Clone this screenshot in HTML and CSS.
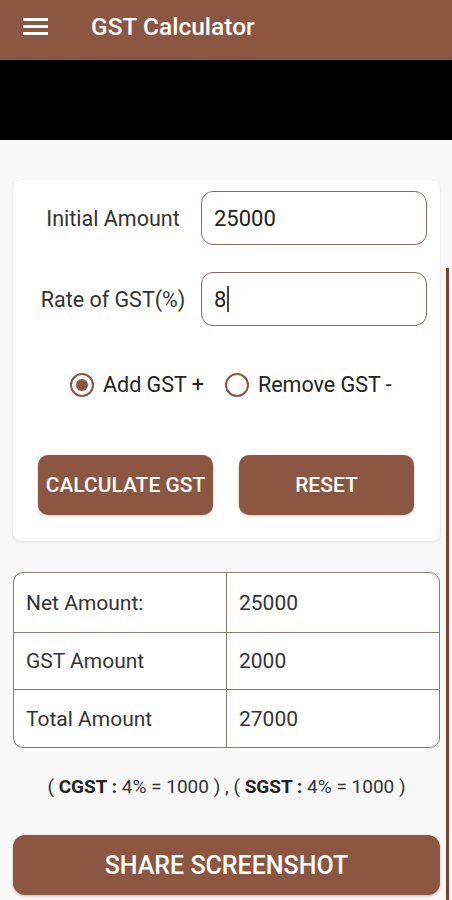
FILE: index.html
```html
<!DOCTYPE html>
<html lang="en">
<head>
    <meta charset="UTF-8">
    <meta name="viewport" content="width=device-width, initial-scale=1.0">
    <title>GST Calculator</title>
    <link rel="stylesheet" href="styles.css">
</head>
<body>
    <header class="app-bar">
        <svg class="menu-icon" width="26" height="18" viewBox="0 0 26 18">
            <rect x="0" y="1" width="25" height="3" fill="#fff"/>
            <rect x="0" y="8" width="25" height="3" fill="#fff"/>
            <rect x="0" y="15" width="25" height="3" fill="#fff"/>
        </svg>
        <h1 class="app-title">GST Calculator</h1>
    </header>
    <div class="ad-band"></div>

    <main class="content">
        <div class="scroll-bar"></div>

        <section class="card">
            <div class="field-row">
                <label class="field-label">Initial Amount</label>
                <div class="field-box">25000</div>
            </div>
            <div class="field-row">
                <label class="field-label">Rate of GST(%)</label>
                <div class="field-box">8<span class="caret"></span></div>
            </div>

            <div class="radio-row">
                <label class="radio">
                    <span class="radio-dot checked"></span>
                    <span>Add GST +</span>
                </label>
                <label class="radio">
                    <span class="radio-dot"></span>
                    <span>Remove GST -</span>
                </label>
            </div>

            <div class="button-row">
                <button class="btn">CALCULATE GST</button>
                <button class="btn">RESET</button>
            </div>
        </section>

        <table class="result-table">
            <tr>
                <td>Net Amount:</td>
                <td>25000</td>
            </tr>
            <tr>
                <td>GST Amount</td>
                <td>2000</td>
            </tr>
            <tr>
                <td>Total Amount</td>
                <td>27000</td>
            </tr>
        </table>

        <p class="split">( <b>CGST :</b> 4% = 1000 ) , ( <b>SGST :</b> 4% = 1000 )</p>

        <button class="share-btn">SHARE SCREENSHOT</button>
    </main>
</body>
</html>
```

FILE: styles.css
```css
body {
    margin: 0;
    font-family: Roboto, 'Noto Sans', sans-serif;
    background: #f8f8f8;
    width: 452px;
    height: 900px;
    overflow: hidden;
}

.app-bar {
    height: 60px;
    background: #8b5742;
    display: flex;
    align-items: center;
    padding-left: 23px;
}

.menu-icon {
    display: block;
    margin-top: -8px;
}

.app-title {
    margin: -8px 0 0 42px;
    color: #fff;
    font-size: 24.5px;
    font-weight: 500;
}

.ad-band {
    height: 80px;
    background: #000;
}

.content {
    position: relative;
    padding: 40px 12px 0 13px;
    height: 760px;
    box-sizing: border-box;
}

.scroll-bar {
    position: absolute;
    right: 3px;
    top: 128px;
    width: 3px;
    bottom: 0;
    background: #7a4330;
}

.card {
    background: #fff;
    border-radius: 8px;
    box-shadow: 0 1px 3px rgba(0,0,0,0.12);
    padding: 11px 13px 26px 0;
}

.field-row {
    display: flex;
    align-items: center;
    margin-bottom: 27px;
}

.field-label {
    width: 188px;
    padding-left: 12px;
    box-sizing: border-box;
    text-align: center;
    font-size: 21.5px;
    color: #333;
    white-space: nowrap;
}

.field-box {
    flex: 1;
    height: 52px;
    border: 1px solid #8b6a5c;
    border-radius: 12px;
    display: flex;
    align-items: center;
    padding-left: 12px;
    font-size: 22px;
    color: #222;
}

.caret {
    display: inline-block;
    width: 2px;
    height: 26px;
    background: #5a3a2c;
    margin-left: 1px;
}

.radio-row {
    display: flex;
    gap: 21px;
    margin-top: 46px;
    padding-left: 57px;
}

.radio {
    display: flex;
    align-items: center;
    gap: 9px;
    font-size: 21.5px;
    color: #222;
}

.radio-dot {
    width: 24px;
    height: 24px;
    border: 2px solid #8b5742;
    border-radius: 50%;
    box-sizing: border-box;
    position: relative;
}

.radio-dot.checked::after {
    content: "";
    position: absolute;
    left: 4px;
    top: 4px;
    width: 12px;
    height: 12px;
    border-radius: 50%;
    background: #8b5742;
}

.button-row {
    display: flex;
    gap: 26px;
    padding-left: 25px;
    margin-top: 58px;
}

.btn {
    width: 175px;
    height: 60px;
    background: #8b5742;
    color: #fff;
    border: none;
    border-radius: 10px;
    font-family: Roboto, sans-serif;
    font-size: 21px;
    font-weight: 500;
    padding: 0;
    white-space: nowrap;
    box-shadow: 0 1px 3px rgba(0,0,0,0.2);
}

.result-table {
    width: 427px;
    margin-top: 31px;
    border-collapse: separate;
    border-spacing: 0;
    border: 1px solid #8d7b72;
    border-radius: 10px;
    background: #fff;
    font-size: 21px;
    color: #333;
}

.result-table td {
    height: 56px;
    padding: 0 12px;
    border-bottom: 1px solid #8d7b72;
}

.result-table tr:first-child td {
    height: 59px;
}

.result-table tr:last-child td {
    height: 57px;
    border-bottom: none;
}

.result-table td:first-child {
    width: 188px;
    border-right: 1px solid #8d7b72;
}

.split {
    margin: 27px 0 0;
    text-align: center;
    font-size: 19px;
    color: #333;
}

.split b {
    color: #222;
}

.share-btn {
    display: block;
    width: 427px;
    height: 60px;
    margin-top: 37px;
    background: #8b5742;
    color: #fff;
    border: none;
    border-radius: 12px;
    font-family: Roboto, sans-serif;
    font-size: 25px;
    font-weight: 500;
    box-shadow: 0 1px 3px rgba(0,0,0,0.25);
}
```
